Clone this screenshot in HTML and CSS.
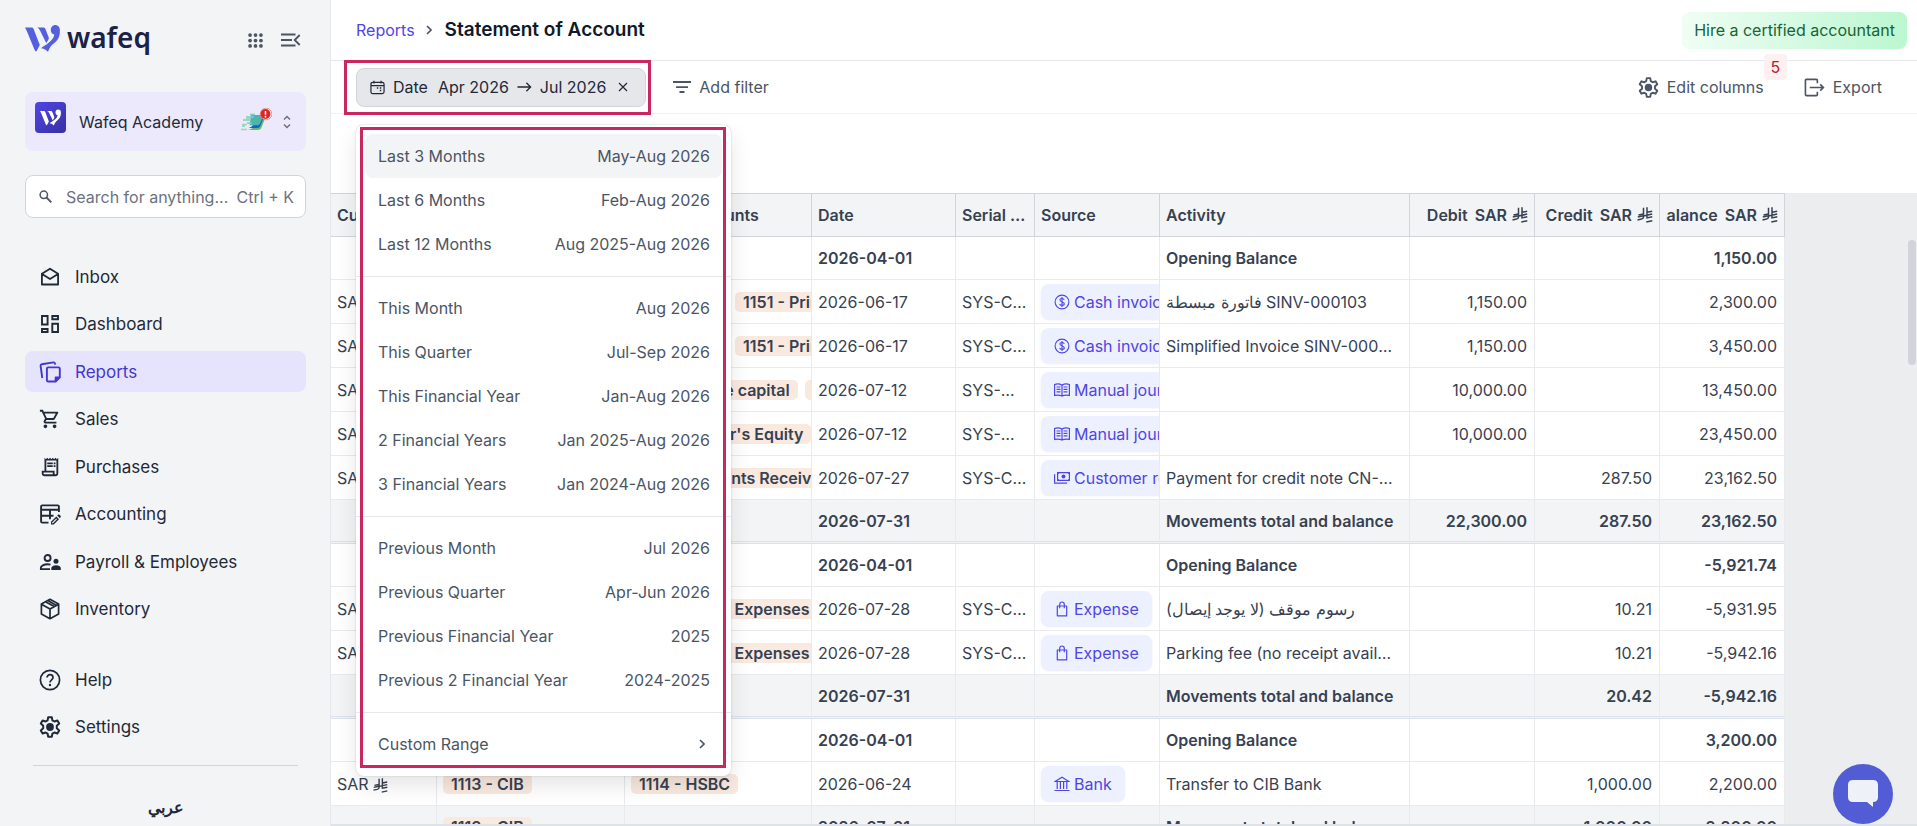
FILE: index.html
```html
<!DOCTYPE html>
<html lang="en">
  <head>
    <meta charset="UTF-8" />
    <meta name="viewport" content="width=device-width, initial-scale=1.0" />
    <title>Statement of Account</title>
    <link rel="stylesheet" href="styles.css">
  </head>
  <body>
    <!-- icon sprite -->
    <svg class="sprite" aria-hidden="true">
      <symbol id="i-mark" viewBox="0 0 35 27">
        <path d="M0 2.500h6.300c1.400 0 2 .6 2.500 1.900l6 15.600-3.400 6.500c-.8-.1-1.300-.6-1.900-1.700L2.200 7C1.500 5.300 1 4.300 0 2.500z" />
        <path d="M12 2.500h6c1.500 0 2.100.6 2.600 1.900l2.900 7.400c.5 1.300.4 2.200-.3 3.300l-2 3L15 5.600c-.6-1.400-1.400-2.300-3-3.100z" />
        <path d="M30.500 0c2.700 0 4.400 2.100 4.400 5.300 0 6.600-1.600 9.500-6.200 13.300-3 2.400-4.200 4.500-5.700 8.200-2.600-2.600-4.300-3.300-7-3.600 1.900-1.700 4-2.600 6.500-4.500 4.300-3.200 6.600-6.300 6.800-9.100-2.200-.3-3.500-1.900-3.500-4.500 0-3 1.800-5.100 4.700-5.100z" />
      </symbol>
      <symbol id="i-apps" viewBox="0 0 16 16">
        <circle cx="2.200" cy="2.200" r="2" /><circle cx="8" cy="2.200" r="2" /><circle cx="13.800" cy="2.200" r="2" />
        <circle cx="2.200" cy="8" r="2" /><circle cx="8" cy="8" r="2" /><circle cx="13.800" cy="8" r="2" />
        <circle cx="2.200" cy="13.800" r="2" /><circle cx="8" cy="13.800" r="2" /><circle cx="13.800" cy="13.800" r="2" />
      </symbol>
      <symbol id="i-collapse" viewBox="0 0 20 14">
        <path d="M0 1.500h14.500M0 7h11M0 12.500h14.500M18.700 2l-5 5 5 5" fill="none" stroke="currentColor" stroke-width="1.900" />
      </symbol>
      <symbol id="i-updown" viewBox="0 0 8 14">
        <path d="M1 4.500l3-3 3 3M1 9.500l3 3 3-3" fill="none" stroke="currentColor" stroke-width="1.500" />
      </symbol>
      <symbol id="i-search" viewBox="0 0 13 13">
        <circle cx="4.800" cy="4.800" r="3.700" fill="none" stroke="currentColor" stroke-width="1.500" />
        <path d="M7.500 7.500l4.800 4.800" stroke="currentColor" stroke-width="1.800" />
      </symbol>
      <symbol id="i-inbox" viewBox="0 0 22 22">
        <path d="M2.900 7.800L11 2.700l8.100 5.100v10.700H2.900zM3 8l8 5 8-5" fill="none" stroke="currentColor" stroke-width="1.800" stroke-linejoin="round" />
      </symbol>
      <symbol id="i-dashboard" viewBox="0 0 22 22">
        <path d="M3 3h5.600v8.500H3zM13.300 3H19v3.200h-5.700zM13.300 10.700H19V19h-5.700zM3 16h5.600v3H3z" fill="none" stroke="currentColor" stroke-width="1.900" />
      </symbol>
      <symbol id="i-reports" viewBox="0 0 22 22">
        <path d="M7.900 7.700c0-.8.500-1.300 1.300-1.300h10.300c.8 0 1.300.5 1.300 1.300v8.700l-4.100 4.100H9.200c-.8 0-1.300-.5-1.300-1.300z" fill="none" stroke="currentColor" stroke-width="1.900" />
        <path d="M15.700 21v-4.200c0-.8.500-1.200 1.200-1.200H21.500z" />
        <path d="M3.300 17L1.600 4.900c-.1-.9.300-1.400 1.200-1.600l11.600-1.900c.9-.1 1.400.3 1.600 1.200l.2 1" fill="none" stroke="currentColor" stroke-width="1.900" />
      </symbol>
      <symbol id="i-cart" viewBox="0 0 24 24">
        <path d="M15.550 13c.75 0 1.410-.41 1.750-1.030l3.580-6.490A.996.996 0 0 0 20.010 4H5.210l-.94-2H1v2h2l3.600 7.590-1.350 2.440C4.520 15.370 5.480 17 7 17h12v-2H7l1.100-2h7.450zM6.160 6h12.150l-2.760 5H8.530L6.160 6zM7 18c-1.100 0-1.990.9-1.990 2S5.900 22 7 22s2-.9 2-2-.9-2-2-2zm10 0c-1.100 0-1.990.9-1.990 2s.89 2 1.990 2 2-.9 2-2-.9-2-2-2z" />
      </symbol>
      <symbol id="i-receipt" viewBox="0 0 24 24">
        <path d="M19.500 3.500L18 2l-1.500 1.500L15 2l-1.500 1.500L12 2l-1.500 1.500L9 2 7.500 3.500 6 2v14H3v3c0 1.660 1.340 3 3 3h12c1.660 0 3-1.340 3-3V2l-1.500 1.500zM15 20H6c-.55 0-1-.45-1-1v-1h10v2zm4-1c0 .55-.45 1-1 1s-1-.45-1-1v-3H8V5h11v14zM9 7h6v2H9zM16 7h2v2h-2zM9 10h6v2H9zM16 10h2v2h-2z" />
      </symbol>
      <symbol id="i-ledger" viewBox="0 0 22 22">
        <path d="M9.500 19.600H3.300c-.8 0-1.200-.4-1.200-1.200V3.600c0-.8.4-1.200 1.200-1.200h15.400c.8 0 1.200.4 1.200 1.200V9M2 6.700h18M2 12.800h12.500M11 6.700v9.500" fill="none" stroke="currentColor" stroke-width="1.900" />
        <path d="M12 21.500v-2.700l5.300-5.300 2.700 2.700-5.300 5.300zM18.200 12.600l.8-.8c.5-.5 1-.5 1.500 0l1 1c.5.5.5 1 0 1.500l-.7.900z" />
        <path d="M13.300 20.200l4.300-4.300" stroke="#f3f4f6" stroke-width="1.200" />
      </symbol>
      <symbol id="i-people" viewBox="0 0 22 22">
        <circle cx="8.600" cy="7" r="3" fill="none" stroke="currentColor" stroke-width="1.900" />
        <path d="M11 18.100H1.900v-1.500c0-1.800 3-3.300 6.700-3.300 1 0 2 .1 2.900.4" fill="none" stroke="currentColor" stroke-width="1.900" />
        <circle cx="17" cy="10.300" r="2.500" />
        <path d="M12.300 19v-2c0-1.700 2.400-2.800 4.800-2.800s4.700 1.100 4.700 2.800v2z" />
      </symbol>
      <symbol id="i-box" viewBox="0 0 22 22">
        <path d="M11 1.300l8.600 4.800v9.800L11 20.700l-8.600-4.800V6.100zM2.400 6.300L11 11l8.600-4.700M11 11v9.500M6.500 3.800l8.700 4.800M8.800 2.600l8.700 4.800" fill="none" stroke="currentColor" stroke-width="1.700" stroke-linejoin="round" />
      </symbol>
      <symbol id="i-help" viewBox="0 0 22 22">
        <circle cx="11" cy="11" r="9.600" fill="none" stroke="currentColor" stroke-width="1.700" />
        <path d="M8 8.600c0-1.700 1.300-2.900 3-2.900s3 1.200 3 2.800c0 2.100-3 2.600-3 5" fill="none" stroke="currentColor" stroke-width="1.700" />
        <circle cx="11" cy="16" r="1.200" />
      </symbol>
      <symbol id="i-gear" viewBox="1 1 22 22">
        <path d="M10.200 2.200h3.600l.6 3.100 2 1.200 3-1 1.800 3.100-2.400 2.100v2.600l2.400 2.100-1.800 3.100-3-1-2 1.200-.6 3.100h-3.600l-.6-3.100-2-1.200-3 1-1.800-3.100 2.400-2.100v-2.600L2.800 8.600l1.800-3.100 3 1 2-1.200z" fill="none" stroke="currentColor" stroke-width="2" stroke-linejoin="round" />
        <circle cx="12" cy="12" r="3.900" />
      </symbol>
      <symbol id="i-calendar" viewBox="0 0 16 16">
        <path d="M1 4.500c0-1.400.7-2 2-2h10c1.300 0 2 .6 2 2v8c0 1.400-.7 2-2 2H3c-1.300 0-2-.6-2-2zM1 6h14M4.200.7v3M11.800.7v3" fill="none" stroke="currentColor" stroke-width="1.300" />
        <path d="M7.300 7.700h1.500v1.500H7.300zM10.500 7.700H12v1.500h-1.500zM10.500 10.500H12V12h-1.500z" />
      </symbol>
      <symbol id="i-arrow" viewBox="0 0 16 12">
        <path d="M.5 6h14M10 1.500L14.500 6 10 10.500" fill="none" stroke="currentColor" stroke-width="1.400" />
      </symbol>
      <symbol id="i-close" viewBox="0 0 10 10">
        <path d="M1 1l8 8M9 1L1 9" stroke="currentColor" stroke-width="1.200" />
      </symbol>
      <symbol id="i-filter" viewBox="0 0 18 12">
        <path d="M0 1h18M3 6.200h12M6.500 11h5" stroke="currentColor" stroke-width="1.800" />
      </symbol>
      <symbol id="i-chevron" viewBox="0 0 6 10">
        <path d="M1 1l4 4-4 4" fill="none" stroke="currentColor" stroke-width="1.600" />
      </symbol>
      <symbol id="i-export" viewBox="0 0 22 20">
        <path d="M14 5.500V2.700c0-.8-.4-1.200-1.200-1.200H2.700c-.8 0-1.200.4-1.200 1.200v14.600c0 .8.4 1.200 1.200 1.200h10.100c.8 0 1.200-.4 1.200-1.200v-2.800M6 10h14M17 6.700l3.300 3.300-3.300 3.300" fill="none" stroke="currentColor" stroke-width="1.700" />
      </symbol>
      <symbol id="i-riyal" viewBox="0 0 16 16">
        <path d="M6.500.8v9.300c0 1.200-.8 1.700-2 2l-4 .9M10 .3v10.600l5.300-1.100M1.500 7.900l4.800-1M.8 10l5.500-1.200M10 5.300l5.200-1M5.500 9.200l9.700-2.100M9.300 15l6-1.300" fill="none" stroke="currentColor" stroke-width="1.500" />
      </symbol>
      <symbol id="i-dollar" viewBox="0 0 16 16">
        <circle cx="8" cy="8" r="6.900" fill="none" stroke="currentColor" stroke-width="1.100" />
        <path d="M10.200 6c-.2-1-1-1.500-2.200-1.500S5.900 5.100 5.900 6.100c0 2.300 4.400 1.300 4.400 3.700 0 1-1 1.700-2.300 1.700s-2.200-.6-2.300-1.600M8 3v10" fill="none" stroke="currentColor" stroke-width="1.100" />
      </symbol>
      <symbol id="i-book" viewBox="0 0 16 14">
        <path d="M8 2.500v10.300M.6 1.500c2.600-.9 5-.7 7.400.6 2.400-1.300 4.800-1.500 7.400-.6v10.900c-2.600-.6-5-.5-7.400.6-2.400-1.100-4.800-1.200-7.400-.6z" fill="none" stroke="currentColor" stroke-width="1.200" />
        <path d="M2.500 4h4M2.500 6.400h4M2.500 8.800h4M9.500 4h4M9.500 6.400h4M9.500 8.800h4" stroke="currentColor" stroke-width="1.200" />
      </symbol>
      <symbol id="i-cash" viewBox="0 0 16 12">
        <path d="M3.600.7h11.800v7.700H3.600zM.6 2.300v8.900h12.500" fill="none" stroke="currentColor" stroke-width="1.200" />
        <circle cx="9.500" cy="4.500" r="2" />
        <path d="M3.600.7h2l-2 2zM15.400.7v2l-2-2zM3.600 8.400v-2l2 2zM15.400 8.400h-2l2-2z" />
      </symbol>
      <symbol id="i-bag" viewBox="0 0 16 16">
        <path d="M3.300 5h9.400v9.800H3.300zM5.700 7.200V3.500c0-1.500.9-2.500 2.300-2.500s2.300 1 2.300 2.500v3.700" fill="none" stroke="currentColor" stroke-width="1.200" stroke-linejoin="round" />
      </symbol>
      <symbol id="i-bank" viewBox="0 0 16 16">
        <path d="M1 5.500L8 1.300l7 4.200zM3.200 6v7M6.400 6v7M9.600 6v7M12.800 6v7M.5 14.500h15" fill="none" stroke="currentColor" stroke-width="1.200" />
      </symbol>
    </svg>

    <aside class="sidebar">
      <div class="brand">
        <a class="brand-logo" href="#">
          <svg class="mark" aria-hidden="true"><use href="#i-mark" /></svg>
          <span>wafeq</span>
        </a>
        <button class="icon-btn" type="button" aria-label="Apps"><svg class="apps-icon"><use href="#i-apps" /></svg></button>
        <button class="icon-btn" type="button" aria-label="Collapse menu"><svg class="collapse-icon"><use href="#i-collapse" /></svg></button>
      </div>

      <button class="org" type="button">
        <span class="org-logo"><svg><use href="#i-mark" /></svg></span>
        <span class="org-name">Wafeq Academy</span>
        <svg class="org-plan" viewBox="0 0 31 24" aria-hidden="true">
          <path d="M12 8h13l-4.500 11.500c-.6 1.600-1.500 2.500-3.500 2.500H7c5-1 6-4 7-7z" fill="#66bb6a" />
          <path d="M11 7.500h12.500l-4 10c-.7 1.700-1.700 2.500-3.500 2.500H7.500c4-1 5-3.500 6-6z" fill="#1565c0" />
          <path d="M10 7h10.500c1.500 0 1.900.7 1.400 2l-2.600 6c-.7 1.700-1.700 2.300-3.300 2.300H8.500z" fill="#4db6ac" />
          <path d="M5 9h8M2 12h8M6 15h5M1 18h3M9 6.500h5" stroke="#80cbc4" stroke-width="1.400" />
          <path d="M0 21.500h6M1 16.500h5M5 10.500h4" stroke="#a5d6a7" stroke-width="1.300" />
          <circle cx="25" cy="6" r="5.800" fill="#fff" stroke="#ef5350" stroke-width=".6" />
          <circle cx="24.500" cy="6" r="5" fill="#dc2626" />
          <path d="M24.500 3v3.800M24.500 7.800v1.600" stroke="#fff" stroke-width="1.500" />
        </svg>
        <svg class="updown"><use href="#i-updown" /></svg>
      </button>

      <label class="search">
        <svg class="search-icon"><use href="#i-search" /></svg>
        <input type="text" placeholder="Search for anything..." aria-label="Search" />
        <kbd>Ctrl + K</kbd>
      </label>

      <nav class="nav nav-main">
        <a class="nav-item" href="#"><svg><use href="#i-inbox" /></svg>Inbox</a>
        <a class="nav-item" href="#"><svg><use href="#i-dashboard" /></svg>Dashboard</a>
        <a class="nav-item active" href="#"><svg><use href="#i-reports" /></svg>Reports</a>
        <a class="nav-item" href="#"><svg><use href="#i-cart" /></svg>Sales</a>
        <a class="nav-item" href="#"><svg><use href="#i-receipt" /></svg>Purchases</a>
        <a class="nav-item" href="#"><svg><use href="#i-ledger" /></svg>Accounting</a>
        <a class="nav-item" href="#"><svg><use href="#i-people" /></svg>Payroll &amp; Employees</a>
        <a class="nav-item" href="#"><svg><use href="#i-box" /></svg>Inventory</a>
      </nav>

      <nav class="nav nav-extra">
        <a class="nav-item" href="#"><svg><use href="#i-help" /></svg>Help</a>
        <a class="nav-item" href="#"><svg><use href="#i-gear" /></svg>Settings</a>
      </nav>

      <div class="language"><a href="#" lang="ar">عربي</a></div>
    </aside>

    <main class="main">
      <header class="topbar">
        <a class="crumb" href="#">Reports</a>
        <svg class="crumb-sep"><use href="#i-chevron" /></svg>
        <h1>Statement of Account</h1>
        <button class="hire" type="button">Hire a certified accountant</button>
      </header>

      <div class="toolbar">
        <div class="date-filter">
          <button class="date-chip" type="button">
            <svg class="calendar-icon"><use href="#i-calendar" /></svg>
            <span class="chip-label">Date</span>
            <span>Apr 2026</span>
            <svg class="arrow-icon"><use href="#i-arrow" /></svg>
            <span>Jul 2026</span>
            <svg class="close-icon"><use href="#i-close" /></svg>
          </button>
          <span class="marker marker-chip"></span>

          <div class="menu">
            <div class="menu-group">
              <button class="menu-item current" type="button"><span>Last 3 Months</span><span>May-Aug 2026</span></button>
              <button class="menu-item" type="button"><span>Last 6 Months</span><span>Feb-Aug 2026</span></button>
              <button class="menu-item" type="button"><span>Last 12 Months</span><span>Aug 2025-Aug 2026</span></button>
            </div>
            <div class="menu-group">
              <button class="menu-item" type="button"><span>This Month</span><span>Aug 2026</span></button>
              <button class="menu-item" type="button"><span>This Quarter</span><span>Jul-Sep 2026</span></button>
              <button class="menu-item" type="button"><span>This Financial Year</span><span>Jan-Aug 2026</span></button>
              <button class="menu-item" type="button"><span>2 Financial Years</span><span>Jan 2025-Aug 2026</span></button>
              <button class="menu-item" type="button"><span>3 Financial Years</span><span>Jan 2024-Aug 2026</span></button>
            </div>
            <div class="menu-group">
              <button class="menu-item" type="button"><span>Previous Month</span><span>Jul 2026</span></button>
              <button class="menu-item" type="button"><span>Previous Quarter</span><span>Apr-Jun 2026</span></button>
              <button class="menu-item" type="button"><span>Previous Financial Year</span><span>2025</span></button>
              <button class="menu-item" type="button"><span>Previous 2 Financial Year</span><span>2024-2025</span></button>
            </div>
            <div class="menu-group">
              <button class="menu-item" type="button"><span>Custom Range</span><svg class="more-icon"><use href="#i-chevron" /></svg></button>
            </div>
            <span class="marker marker-menu"></span>
          </div>
        </div>

        <button class="tool" type="button"><svg class="filter-icon"><use href="#i-filter" /></svg>Add filter</button>
        <div class="tools-end">
          <button class="tool edit-columns" type="button"><svg class="tool-icon"><use href="#i-gear" /></svg>Edit columns<span class="count">5</span></button>
          <button class="tool" type="button"><svg class="tool-icon"><use href="#i-export" /></svg>Export</button>
        </div>
      </div>

      <div class="report">
        <table>
          <colgroup>
            <col class="c-currency"><col class="c-account"><col class="c-contra"><col class="c-date"><col class="c-serial">
            <col class="c-amount"><col class="c-activity"><col class="c-amount"><col class="c-amount"><col class="c-amount">
          </colgroup>
          <thead>
            <tr>
              <th>Currency</th><th>Account</th><th>Contra accounts</th><th>Date</th><th>Serial number</th><th>Source</th><th>Activity</th>
              <th><div class="amount-head"><span>Debit</span><span>SAR</span><svg><use href="#i-riyal" /></svg></div></th>
              <th><div class="amount-head"><span>Credit</span><span>SAR</span><svg><use href="#i-riyal" /></svg></div></th>
              <th><div class="amount-head"><span>Balance</span><span>SAR</span><svg><use href="#i-riyal" /></svg></div></th>
            </tr>
          </thead>
          <tbody>
            <tr class="opening"><td></td><td></td><td></td><td>2026-04-01</td><td></td><td></td><td>Opening Balance</td><td></td><td></td><td class="num">1,150.00</td></tr>
            <tr>
              <td>SAR <svg class="riyal"><use href="#i-riyal" /></svg></td><td></td>
              <td class="clip"><span class="tag">1190 - VAT</span><span class="tag">1151 - Prime</span></td>
              <td>2026-06-17</td><td>SYS-CSH-12</td>
              <td class="clip"><a class="source" href="#"><svg><use href="#i-dollar" /></svg>Cash invoice</a></td>
              <td class="note">فاتورة مبسطة SINV-000103</td><td class="num">1,150.00</td><td></td><td class="num">2,300.00</td>
            </tr>
            <tr>
              <td>SAR <svg class="riyal"><use href="#i-riyal" /></svg></td><td></td>
              <td class="clip"><span class="tag">1190 - VAT</span><span class="tag">1151 - Prime</span></td>
              <td>2026-06-17</td><td>SYS-CSH-13</td>
              <td class="clip"><a class="source" href="#"><svg><use href="#i-dollar" /></svg>Cash invoice</a></td>
              <td class="note">Simplified Invoice SINV-000104</td><td class="num">1,150.00</td><td></td><td class="num">3,450.00</td>
            </tr>
            <tr>
              <td>SAR <svg class="riyal"><use href="#i-riyal" /></svg></td><td></td>
              <td class="clip"><span class="tag">3101 - Share capital</span><span class="tag">3112</span></td>
              <td>2026-07-12</td><td>SYS-MJ-12</td>
              <td class="clip"><a class="source" href="#"><svg><use href="#i-book" /></svg>Manual journal</a></td>
              <td></td><td class="num">10,000.00</td><td></td><td class="num">13,450.00</td>
            </tr>
            <tr>
              <td>SAR <svg class="riyal"><use href="#i-riyal" /></svg></td><td></td>
              <td class="clip"><span class="tag">3111 - Owner's Equity</span></td>
              <td>2026-07-12</td><td>SYS-MJ-13</td>
              <td class="clip"><a class="source" href="#"><svg><use href="#i-book" /></svg>Manual journal</a></td>
              <td></td><td class="num">10,000.00</td><td></td><td class="num">23,450.00</td>
            </tr>
            <tr>
              <td>SAR <svg class="riyal"><use href="#i-riyal" /></svg></td><td></td>
              <td class="clip"><span class="tag">1111 - Accounts Receivable</span></td>
              <td>2026-07-27</td><td>SYS-CR-12</td>
              <td class="clip"><a class="source" href="#"><svg><use href="#i-cash" /></svg>Customer refund</a></td>
              <td class="note">Payment for credit note CN-0012</td><td></td><td class="num">287.50</td><td class="num">23,162.50</td>
            </tr>
            <tr class="total"><td></td><td></td><td></td><td>2026-07-31</td><td></td><td></td><td>Movements total and balance</td><td class="num">22,300.00</td><td class="num">287.50</td><td class="num">23,162.50</td></tr>

            <tr class="opening"><td></td><td></td><td></td><td>2026-04-01</td><td></td><td></td><td>Opening Balance</td><td></td><td></td><td class="num">-5,921.74</td></tr>
            <tr>
              <td>SAR <svg class="riyal"><use href="#i-riyal" /></svg></td><td></td>
              <td class="clip"><span class="tag">5201 - Bank Expenses</span></td>
              <td>2026-07-28</td><td>SYS-CEX-12</td>
              <td class="clip"><a class="source" href="#"><svg><use href="#i-bag" /></svg>Expense</a></td>
              <td class="note"><bdi dir="rtl">رسوم موقف (لا يوجد إيصال)</bdi></td><td></td><td class="num">10.21</td><td class="num">-5,931.95</td>
            </tr>
            <tr>
              <td>SAR <svg class="riyal"><use href="#i-riyal" /></svg></td><td></td>
              <td class="clip"><span class="tag">5201 - Bank Expenses</span></td>
              <td>2026-07-28</td><td>SYS-CEX-13</td>
              <td class="clip"><a class="source" href="#"><svg><use href="#i-bag" /></svg>Expense</a></td>
              <td class="note">Parking fee (no receipt available)</td><td></td><td class="num">10.21</td><td class="num">-5,942.16</td>
            </tr>
            <tr class="total"><td></td><td></td><td></td><td>2026-07-31</td><td></td><td></td><td>Movements total and balance</td><td></td><td class="num">20.42</td><td class="num">-5,942.16</td></tr>

            <tr class="opening"><td></td><td></td><td></td><td>2026-04-01</td><td></td><td></td><td>Opening Balance</td><td></td><td></td><td class="num">3,200.00</td></tr>
            <tr>
              <td>SAR <svg class="riyal"><use href="#i-riyal" /></svg></td>
              <td class="clip"><span class="tag">1113 - CIB</span></td>
              <td class="clip"><span class="tag">1114 - HSBC</span></td>
              <td>2026-06-24</td><td></td>
              <td class="clip"><a class="source" href="#"><svg><use href="#i-bank" /></svg>Bank</a></td>
              <td class="note">Transfer to CIB Bank</td><td></td><td class="num">1,000.00</td><td class="num">2,200.00</td>
            </tr>
            <tr class="total"><td></td><td class="clip"><span class="tag">1113 - CIB</span></td><td></td><td>2026-07-31</td><td></td><td></td><td>Movements total and balance</td><td></td><td class="num">1,000.00</td><td class="num">2,200.00</td></tr>
          </tbody>
        </table>
        <span class="scroll-thumb"></span>
      </div>
    </main>

    <button class="chat" type="button" aria-label="Open chat">
      <svg viewBox="0 0 30 28"><path d="M5 0h20c3.300 0 5 1.700 5 5v12c0 3.300-1.700 5-5 5v5L19 22H5c-3.300 0-5-1.700-5-5V5c0-3.300 1.700-5 5-5z" /></svg>
    </button>
  </body>
</html>
```
FILE: styles.css
```css
* {
  box-sizing: border-box;
}

body {
  margin: 0;
  height: 100vh;
  display: flex;
  overflow: hidden;
  font-family: Inter, "Noto Sans", sans-serif;
  font-size: 16px;
  line-height: 20px;
  color: #374151;
  background: #fff;
}

button {
  font: inherit;
  color: inherit;
  border: 0;
  padding: 0;
  background: none;
  cursor: pointer;
}

a {
  color: inherit;
  text-decoration: none;
}

svg {
  flex: none;
  fill: currentColor;
}

.sprite {
  position: absolute;
  width: 0;
  height: 0;
}

/* sidebar */

.sidebar {
  width: 331px;
  flex: none;
  display: flex;
  flex-direction: column;
  padding: 0 24px 0 25px;
  background: #f3f4f6;
  border-right: 1px solid #e5e7eb;
  color: #1f2937;
}

.brand {
  display: flex;
  align-items: center;
  gap: 18px;
  height: 80px;
  padding-right: 5px;
  color: #4b5563;
}

.brand-logo {
  flex: 1;
  display: flex;
  align-items: center;
  gap: 7px;
  font-family: "Noto Sans", sans-serif;
  font-size: 28px;
  font-weight: 600;
  line-height: 36px;
  color: #1b2148;
}

.brand-logo span {
  padding-bottom: 6px;
}

.mark {
  width: 35px;
  height: 27px;
  margin-bottom: 3px;
  color: #5560de;
}

.icon-btn {
  display: flex;
}

.apps-icon {
  width: 15px;
  height: 15px;
}

.collapse-icon {
  width: 20px;
  height: 14px;
}

.org {
  display: flex;
  align-items: center;
  height: 59px;
  margin-top: 12px;
  padding: 0 15px 0 10px;
  border-radius: 8px;
  background: #ebe9fb;
}

.org-logo {
  display: flex;
  align-items: center;
  justify-content: center;
  width: 31px;
  height: 31px;
  margin-bottom: 8px;
  border-radius: 4px;
  color: #fff;
  background: linear-gradient(135deg, #4f46e5, #3730a3);
}

.org-logo svg {
  width: 21px;
  height: 17px;
}

.org-name {
  flex: 1;
  margin-left: 13px;
  text-align: left;
}

.org-plan {
  width: 31px;
  height: 24px;
  margin-right: 11px;
  margin-bottom: 4px;
}

.updown {
  width: 8px;
  height: 14px;
  color: #6b7280;
}

.search {
  display: flex;
  align-items: center;
  height: 43px;
  margin-top: 24px;
  padding: 0 11px 0 13px;
  border: 1px solid #d1d5db;
  border-radius: 8px;
  background: #fff;
}

.search-icon {
  width: 13px;
  height: 13px;
  color: #4b5563;
}

.search input {
  flex: 1;
  min-width: 0;
  margin-left: 14px;
  padding: 0;
  border: 0;
  outline: 0;
  font: inherit;
  background: none;
}

.search input::placeholder,
.search kbd {
  color: #6b7280;
}

.search kbd {
  font: inherit;
}

.nav {
  display: flex;
  flex-direction: column;
}

.nav-main {
  flex: 1;
  justify-content: space-between;
  margin-top: 38px;
}

.nav-extra {
  gap: 6px;
  margin-top: 29px;
}

.nav-item {
  display: flex;
  align-items: center;
  gap: 14px;
  height: 41px;
  padding-left: 14px;
  border-radius: 8px;
  font-size: 17px;
}

.nav-item svg {
  width: 22px;
  height: 22px;
}

.nav-item.active {
  color: #4338ca;
  background: #e6e3fc;
}

.language {
  height: 61px;
  margin: 18px 8px 0;
  padding-top: 31px;
  border-top: 1px solid #d1d5db;
  font-weight: 600;
  text-align: center;
}

/* page header */

.main {
  flex: 1;
  min-width: 0;
  display: flex;
  flex-direction: column;
}

.topbar {
  display: flex;
  align-items: center;
  height: 61px;
  padding: 0 10px 0 25px;
  border-bottom: 1px solid #e5e7eb;
}

.crumb {
  color: #4f46e5;
}

.crumb-sep {
  width: 6px;
  height: 10px;
  margin: 0 13px 0 11px;
  color: #4b5563;
}

h1 {
  flex: 1;
  margin: 0;
  font-size: 19px;
  font-weight: 600;
  line-height: 28px;
  color: #111827;
}

.hire {
  height: 37px;
  padding: 0 12px;
  border-radius: 8px;
  color: #166534;
  background: linear-gradient(90deg, #f0fdf4, #bbf7d0);
}

/* toolbar */

.toolbar {
  display: flex;
  align-items: center;
  height: 53px;
  padding: 0 35px 0 25px;
  border-bottom: 1px solid #f0f1f3;
}

.date-filter {
  position: relative;
  z-index: 2;
}

.date-chip {
  display: flex;
  align-items: center;
  gap: 8px;
  height: 39px;
  padding: 0 17px 0 13px;
  border: 1px solid #d1d5db;
  border-radius: 8px;
  color: #1f2937;
  background: #e5e7eb;
}

.chip-label {
  margin-right: 2px;
}

.calendar-icon {
  width: 15px;
  height: 15px;
}

.arrow-icon {
  width: 15px;
  height: 12px;
}

.close-icon {
  width: 10px;
  height: 10px;
  margin-left: 4px;
}

.tool {
  display: flex;
  align-items: center;
  gap: 8px;
  color: #4b5563;
}

.date-filter + .tool {
  margin-left: 27px;
}

.filter-icon {
  width: 18px;
  height: 12px;
}

.tools-end {
  display: flex;
  gap: 40px;
  margin-left: auto;
}

.tool-icon {
  width: 21px;
  height: 21px;
}

.edit-columns {
  position: relative;
}

.count {
  position: absolute;
  left: 100%;
  bottom: 18px;
  width: 23px;
  line-height: 26px;
  border-radius: 4px;
  color: #b91c1c;
  background: #fef0f0;
}

/* date range menu */

.menu {
  position: absolute;
  top: calc(100% + 18px);
  left: 0;
  width: 375px;
  border-radius: 8px;
  color: #4b5563;
  background: #fff;
  box-shadow: 0 0 2px rgba(0, 0, 0, 0.2), 0 10px 22px rgba(0, 0, 0, 0.1);
}

.menu-group {
  padding: 9px 9px 10px;
}

.menu-group + .menu-group {
  border-top: 1px solid #e5e7eb;
}

.menu-item {
  display: flex;
  align-items: center;
  justify-content: space-between;
  width: 100%;
  height: 44px;
  padding: 0 12px 0 13px;
  border-radius: 8px;
}

.menu-item.current {
  background: #f3f4f6;
}

.more-icon {
  width: 6px;
  height: 10px;
  margin-right: 5px;
}

.marker {
  position: absolute;
  border: 3px solid #c9275d;
  pointer-events: none;
}

.marker-chip {
  inset: -8px -5px -8px -12px;
}

.marker-menu {
  inset: 2px 5px 8px 4px;
}

/* report table */

.report {
  flex: 1;
  min-height: 0;
  position: relative;
  overflow: hidden;
  margin-top: 79px;
  background: #ecedef;
  border-bottom: 2px solid #dfe2e8;
}

table {
  width: 1454px;
  table-layout: fixed;
  border-collapse: separate;
  border-spacing: 0;
  background: #fff;
}

.c-currency { width: 106px; }
.c-account { width: 188px; }
.c-contra { width: 187px; }
.c-date { width: 144px; }
.c-serial { width: 79px; }
.c-amount { width: 125px; }
.c-activity { width: 250px; }

th,
td {
  height: 44px;
  padding: 0 6px;
  overflow: hidden;
  white-space: nowrap;
  text-overflow: ellipsis;
  text-align: left;
  border-right: 1px solid #e9eaed;
  border-bottom: 1px solid #e9eaed;
}

th {
  font-weight: 600;
  background: #f3f4f6;
  border-top: 1px solid #d1d5db;
  border-right-color: #d1d5db;
  border-bottom-color: #d1d5db;
}

.amount-head {
  display: flex;
  align-items: center;
  justify-content: flex-end;
  gap: 7px;
  overflow: hidden;
}

.amount-head svg {
  width: 16px;
  height: 16px;
  margin-left: -2px;
}

.riyal {
  width: 15px;
  height: 15px;
  vertical-align: -3px;
}

td.num {
  padding-right: 7px;
  text-align: right;
}

td.note {
  padding-right: 13px;
}

.clip {
  text-overflow: clip;
}

.opening td {
  height: 43px;
  font-weight: 600;
}

.total td {
  font-weight: 600;
  background: #f3f4f6;
  border-bottom: 3px double #dbe1ea;
}

.tag {
  display: inline-block;
  margin-right: 7px;
  padding: 0 8px;
  border-radius: 5px;
  font-weight: 600;
  background: #f9e9df;
}

.source {
  display: inline-flex;
  align-items: center;
  gap: 4px;
  height: 35px;
  padding: 0 13px;
  border-radius: 8px;
  vertical-align: middle;
  color: #4f46e5;
  background: #edf0fe;
  box-shadow: 0 1px 2px rgba(79, 70, 229, 0.12);
}

.source svg {
  width: 16px;
  height: 16px;
}

.scroll-thumb {
  position: absolute;
  top: 47px;
  right: 1px;
  width: 8px;
  height: 125px;
  border-radius: 4px;
  background: #d1d5db;
}

/* support chat */

.chat {
  position: fixed;
  right: 24px;
  bottom: 2px;
  z-index: 3;
  display: flex;
  align-items: center;
  justify-content: center;
  width: 60px;
  height: 60px;
  border-radius: 50%;
  color: #eff1f9;
  background: #525cd5;
}

.chat svg {
  width: 30px;
  height: 28px;
}
```
